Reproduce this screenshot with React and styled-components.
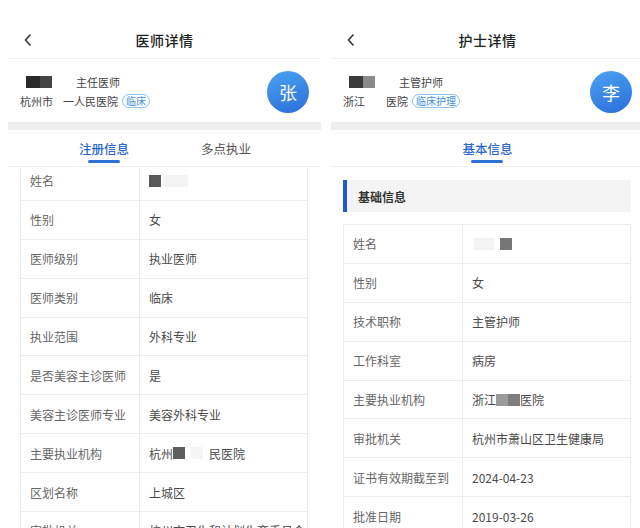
import React from "react";
import styled, { createGlobalStyle } from "styled-components";

const Global = createGlobalStyle`
  html, body { margin: 0; padding: 0; background: #fff; }
  body { font-family: "Noto Sans CJK SC", "Noto Sans", sans-serif; }
  * { box-sizing: border-box; }
`;

const Stage = styled.div`
  width: 640px;
  height: 528px;
  overflow: hidden;
  display: flex;
  gap: 10px;
  padding-left: 8px;
  background: #fff;
`;

const Panel = styled.div`
  flex: 0 0 313px;
  width: 313px;
  height: 528px;
  display: flex;
  flex-direction: column;
  overflow: hidden;
  background: #fff;
`;

const Header = styled.div`
  height: 59px;
  padding-top: 21px;
  display: flex;
  align-items: center;
  position: relative;
  border-bottom: 1px solid #f1f1f1;
  justify-content: center;
`;

const Back = styled.svg`
  position: absolute;
  left: 15px;
  top: 33px;
  width: 10px;
  height: 14px;
`;

const Title = styled.div`
  font-size: 14px;
  font-weight: 500;
  color: #222;
  letter-spacing: 0.5px;
`;

const Profile = styled.div`
  height: 63px;
  display: flex;
  align-items: center;
  justify-content: space-between;
  padding: 0 12px 0 12px;
`;

const ProfileInfo = styled.div`
  display: flex;
  flex-direction: column;
  gap: 4px;
  padding-top: 2px;
`;

const InfoLine = styled.div`
  display: flex;
  align-items: center;
  height: 15px;
  font-size: 11px;
  color: #444;
  white-space: nowrap;
`;

const Gap = styled.span`
  display: inline-block;
  width: ${(p) => p.$w}px;
`;

const Blur = styled.span`
  display: inline-block;
  width: ${(p) => p.$w}px;
  height: ${(p) => p.$h || 12}px;
  background: ${(p) => p.$c};
`;

const Badge = styled.span`
  display: inline-flex;
  align-items: center;
  height: 14px;
  padding: 0 3px;
  margin-left: 4px;
  border: 1px solid #8fc0ee;
  border-radius: 7px;
  color: #3d8fe0;
  font-size: 10px;
  line-height: 1;
`;

const Avatar = styled.div`
  width: 42px;
  height: 42px;
  border-radius: 50%;
  background: linear-gradient(160deg, #4aa2f2 0%, #2b6ed9 100%);
  color: #fff;
  font-size: 18px;
  display: flex;
  align-items: center;
  justify-content: center;
  margin-top: 2px;
`;

const Band = styled.div`
  height: 8px;
  background: #eeeeee;
`;

const Tabs = styled.div`
  height: 37px;
  display: flex;
  justify-content: ${(p) => (p.$single ? "center" : "space-between")};
  padding: ${(p) => (p.$single ? "0" : "0 70px 0 71px")};
  border-bottom: 1px solid #f0f0f0;
`;

const Tab = styled.div`
  position: relative;
  display: flex;
  align-items: center;
  height: 36px;
  padding-top: 1px;
  font-size: 12.5px;
  font-weight: ${(p) => (p.$active ? 500 : 400)};
  color: ${(p) => (p.$active ? "#2d68cf" : "#555")};
  &::after {
    content: "";
    display: ${(p) => (p.$active ? "block" : "none")};
    position: absolute;
    left: 50%;
    bottom: 3px;
    width: 32px;
    margin-left: -16px;
    height: 3px;
    border-radius: 2px;
    background: #2e6fd8;
  }
`;

const Content = styled.div`
  flex: 1;
  overflow: hidden;
  padding: 0 13px 0 12px;
`;

const SectionHead = styled.div`
  margin-top: 13px;
  height: 32px;
  background: #f4f4f4;
  border-left: 4px solid #2457d6;
  display: flex;
  align-items: center;
  padding-left: 11px;
  font-size: 12px;
  font-weight: 700;
  color: #333;
`;

const Table = styled.div`
  margin-top: ${(p) => p.$top}px;
  border: 1px solid #ececec;
  border-bottom: none;
`;

const Row = styled.div`
  display: grid;
  grid-template-columns: 119px 1fr;
  height: 38.9px;
  border-bottom: 1px solid #ececec;
`;

const Label = styled.div`
  display: flex;
  align-items: center;
  padding-left: 9px;
  font-size: 12px;
  color: #666;
  border-right: 1px solid #ececec;
  white-space: nowrap;
`;

const Value = styled.div`
  display: flex;
  align-items: center;
  padding-left: 9px;
  font-size: 12px;
  color: #4a4a4a;
  white-space: nowrap;
`;

const Chevron = () => (
  <Back viewBox="0 0 10 14">
    <path d="M7 2 L2.5 7 L7 12" fill="none" stroke="#333" strokeWidth="1.6" strokeLinecap="round" strokeLinejoin="round" />
  </Back>
);

const doctorRows = [
  ["姓名", <><Blur $w={12} $c="#5a5a5a" /><Gap $w={2} /><Blur $w={25} $c="#f3f3f3" /></>],
  ["性别", "女"],
  ["医师级别", "执业医师"],
  ["医师类别", "临床"],
  ["执业范围", "外科专业"],
  ["是否美容主诊医师", "是"],
  ["美容主诊医师专业", "美容外科专业"],
  ["主要执业机构", <>杭州<Blur $w={12} $c="#5e5e5e" /><Gap $w={6} /><Blur $w={12} $c="#f5f5f5" /><Gap $w={6} />民医院</>],
  ["区划名称", "上城区"],
  ["审批机关", "杭州市卫生和计划生育委员会"],
];

const nurseRows = [
  ["姓名", <><Gap $w={2} /><Blur $w={20} $c="#f4f4f4" /><Gap $w={6} /><Blur $w={12} $c="#777" /></>],
  ["性别", "女"],
  ["技术职称", "主管护师"],
  ["工作科室", "病房"],
  ["主要执业机构", <>浙江<Blur $w={12} $c="#9a9a9a" /><Blur $w={12} $c="#7e7e7e" />医院</>],
  ["审批机关", "杭州市萧山区卫生健康局"],
  ["证书有效期截至到", "2024-04-23"],
  ["批准日期", "2019-03-26"],
];

const InfoTable = ({ rows, top }) => (
  <Table $top={top}>
    {rows.map(([l, v]) => (
      <Row key={l}>
        <Label>{l}</Label>
        <Value>{v}</Value>
      </Row>
    ))}
  </Table>
);

export default function App() {
  return (
    <>
      <Global />
      <Stage>
        <Panel>
          <Header>
            <Chevron />
            <Title>医师详情</Title>
          </Header>
          <Profile>
            <ProfileInfo>
              <InfoLine>
                <Gap $w={6} />
                <Blur $w={14} $c="#2a2a2a" />
                <Blur $w={12} $c="#444" />
                <Gap $w={24} />
                主任医师
              </InfoLine>
              <InfoLine>
                杭州市<Gap $w={10} />一人民医院<Badge>临床</Badge>
              </InfoLine>
            </ProfileInfo>
            <Avatar>张</Avatar>
          </Profile>
          <Band />
          <Tabs>
            <Tab $active>注册信息</Tab>
            <Tab>多点执业</Tab>
          </Tabs>
          <Content>
            <InfoTable rows={doctorRows} top={-6} />
          </Content>
        </Panel>
        <Panel>
          <Header>
            <Chevron />
            <Title>护士详情</Title>
          </Header>
          <Profile>
            <ProfileInfo>
              <InfoLine>
                <Gap $w={6} />
                <Blur $w={14} $c="#3a3a3a" />
                <Blur $w={12} $c="#8a8a8a" />
                <Gap $w={24} />
                主管护师
              </InfoLine>
              <InfoLine>
                浙江<Gap $w={21} />医院<Badge>临床护理</Badge>
              </InfoLine>
            </ProfileInfo>
            <Avatar>李</Avatar>
          </Profile>
          <Band />
          <Tabs $single>
            <Tab $active>基本信息</Tab>
          </Tabs>
          <Content>
            <SectionHead>基础信息</SectionHead>
            <InfoTable rows={nurseRows} top={12} />
          </Content>
        </Panel>
      </Stage>
    </>
  );
}
